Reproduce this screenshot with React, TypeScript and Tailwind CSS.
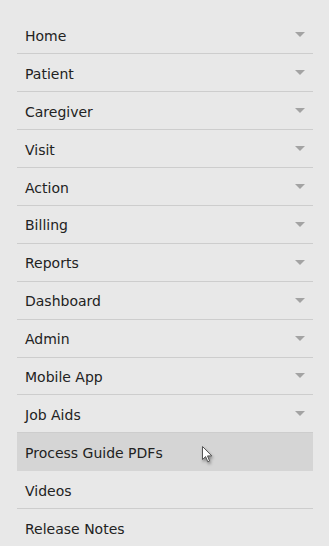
const items: { label: string; caret: boolean; active?: boolean }[] = [
  { label: "Home", caret: true },
  { label: "Patient", caret: true },
  { label: "Caregiver", caret: true },
  { label: "Visit", caret: true },
  { label: "Action", caret: true },
  { label: "Billing", caret: true },
  { label: "Reports", caret: true },
  { label: "Dashboard", caret: true },
  { label: "Admin", caret: true },
  { label: "Mobile App", caret: true },
  { label: "Job Aids", caret: true },
  { label: "Process Guide PDFs", caret: false, active: true },
  { label: "Videos", caret: false },
  { label: "Release Notes", caret: false },
];

export default function App() {
  return (
    <div className="relative h-[546px] w-[329px] overflow-hidden bg-[#e8e8e8] pt-[16.5px] pl-[17px] pr-[16px]">
      <ul className="font-['DejaVu_Sans',sans-serif] text-[14px] text-[#222]">
        {items.map((item) => (
          <li
            key={item.label}
            className={`flex h-[37.9px] items-center justify-between border-b pl-2 pr-2 pt-[3px] ${
              item.active ? "border-[#d5d5d5] bg-[#d5d5d5]" : "border-[#cdcdcd]"
            }`}
          >
            <span>{item.label}</span>
            {item.caret && (
              <span className="mb-[3px] h-0 w-0 border-x-[5px] border-t-[5px] border-x-transparent border-t-[#a3a3a3]" />
            )}
          </li>
        ))}
      </ul>
      {/* mouse pointer */}
      <svg
        className="pointer-events-none absolute left-[202px] top-[446px] drop-shadow-[1px_2px_1.5px_rgba(0,0,0,0.4)]"
        width="12"
        height="18"
        viewBox="0 0 12 18"
      >
        <path
          d="M0.5 0.5 L0.5 13.5 L3.6 10.6 L5.8 15.8 L7.6 15 L5.5 9.9 L9.8 9.9 Z"
          fill="#fff"
          stroke="#555"
          strokeWidth="1"
          strokeLinejoin="round"
        />
      </svg>
    </div>
  );
}
